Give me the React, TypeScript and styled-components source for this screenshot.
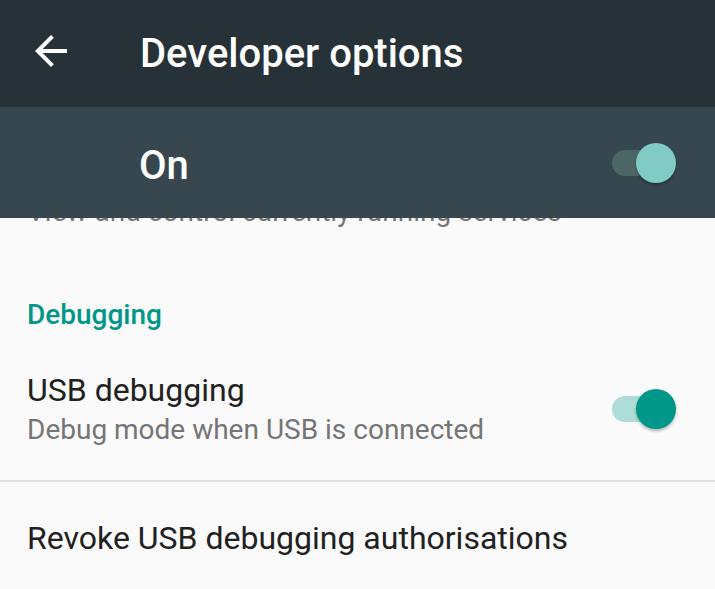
import React from 'react';
import styled, { createGlobalStyle } from 'styled-components';

const GlobalStyle = createGlobalStyle`
  html, body {
    margin: 0;
    padding: 0;
    background: #fafafa;
  }
  body {
    font-family: Roboto, 'Noto Sans', 'Liberation Sans', sans-serif;
    -webkit-font-smoothing: antialiased;
  }
`;

const Screen = styled.div`
  width: 715px;
  height: 589px;
  display: flex;
  flex-direction: column;
  overflow: hidden;
  background: #fafafa;
`;

const AppBar = styled.header`
  height: 107px;
  flex: none;
  display: flex;
  align-items: center;
  padding-left: 27px;
  background: #263238;
`;

const BackButton = styled.button`
  width: 48px;
  height: 48px;
  padding: 0;
  border: 0;
  background: transparent;
  display: flex;
  align-items: center;
  justify-content: center;
  margin-top: -5px;
`;

const Title = styled.h1`
  margin: 0 0 0 65px;
  font-size: 40px;
  line-height: 48px;
  font-weight: 500;
  color: #ffffff;
`;

const MasterBar = styled.div`
  height: 111px;
  flex: none;
  display: flex;
  align-items: center;
  justify-content: space-between;
  padding: 0 39px 0 139px;
  background: #37474f;
`;

const MasterLabel = styled.span`
  font-size: 40px;
  line-height: 48px;
  font-weight: 500;
  color: #ffffff;
  margin-top: 6px;
`;

const Content = styled.main`
  flex: 1;
  overflow: hidden;
`;

// list is scrolled so the previous item's summary sits under the bar
const Scroller = styled.div`
  margin-top: -22px;
`;

const ClippedSummary = styled.div`
  padding: 0 39px 22px 27px;
  font-size: 28px;
  line-height: 32px;
  color: #757575;
  white-space: nowrap;
`;

const CategoryTitle = styled.div`
  padding: 49px 27px 14px;
  font-size: 28px;
  line-height: 32px;
  font-weight: 500;
  color: #009688;
`;

const Item = styled.div<{ $divider?: boolean; $top?: number; $bottom?: number }>`
  display: flex;
  align-items: center;
  justify-content: space-between;
  padding: ${(p) => p.$top ?? 27}px 39px ${(p) => p.$bottom ?? 34}px 27px;
  border-bottom: ${(p) => (p.$divider ? '2px solid #dedede' : 'none')};
`;

const TextBlock = styled.div`
  display: flex;
  flex-direction: column;
  gap: 6px;
`;

const ItemTitle = styled.div`
  font-size: 32px;
  line-height: 36px;
  color: #212121;
  white-space: nowrap;
`;

const ItemSummary = styled.div`
  font-size: 28px;
  line-height: 32px;
  color: #757575;
  white-space: nowrap;
`;

const SwitchRoot = styled.div`
  position: relative;
  width: 64px;
  height: 40px;
  flex: none;
`;

const Track = styled.div<{ $color: string }>`
  position: absolute;
  left: 0;
  top: 7px;
  width: 58px;
  height: 26px;
  border-radius: 13px;
  background: ${(p) => p.$color};
`;

const Thumb = styled.div<{ $color: string }>`
  position: absolute;
  right: 0;
  top: 0;
  width: 40px;
  height: 40px;
  border-radius: 50%;
  background: ${(p) => p.$color};
  box-shadow: 0 2px 3px rgba(0, 0, 0, 0.28);
`;

const Switch = ({ track, thumb }: { track: string; thumb: string }) => (
  <SwitchRoot>
    <Track $color={track} />
    <Thumb $color={thumb} />
  </SwitchRoot>
);

export default function App() {
  return (
    <Screen>
      <GlobalStyle />
      <AppBar>
        <BackButton aria-label="Back">
          <svg width="48" height="48" viewBox="0 0 24 24">
            <path
              fill="#ffffff"
              d="M20 11H7.83l5.59-5.59L12 4l-8 8 8 8 1.41-1.41L7.83 13H20v-2z"
            />
          </svg>
        </BackButton>
        <Title>Developer options</Title>
      </AppBar>
      <MasterBar>
        <MasterLabel>On</MasterLabel>
        <Switch track="#4d6767" thumb="#80cbc4" />
      </MasterBar>
      <Content>
        <Scroller>
          <ClippedSummary>View and control currently running services</ClippedSummary>
          <CategoryTitle>Debugging</CategoryTitle>
          <Item $divider>
            <TextBlock>
              <ItemTitle>USB debugging</ItemTitle>
              <ItemSummary>Debug mode when USB is connected</ItemSummary>
            </TextBlock>
            <Switch track="#aedcd7" thumb="#009688" />
          </Item>
          <Item $top={38} $bottom={38}>
            <ItemTitle>Revoke USB debugging authorisations</ItemTitle>
          </Item>
        </Scroller>
      </Content>
    </Screen>
  );
}
